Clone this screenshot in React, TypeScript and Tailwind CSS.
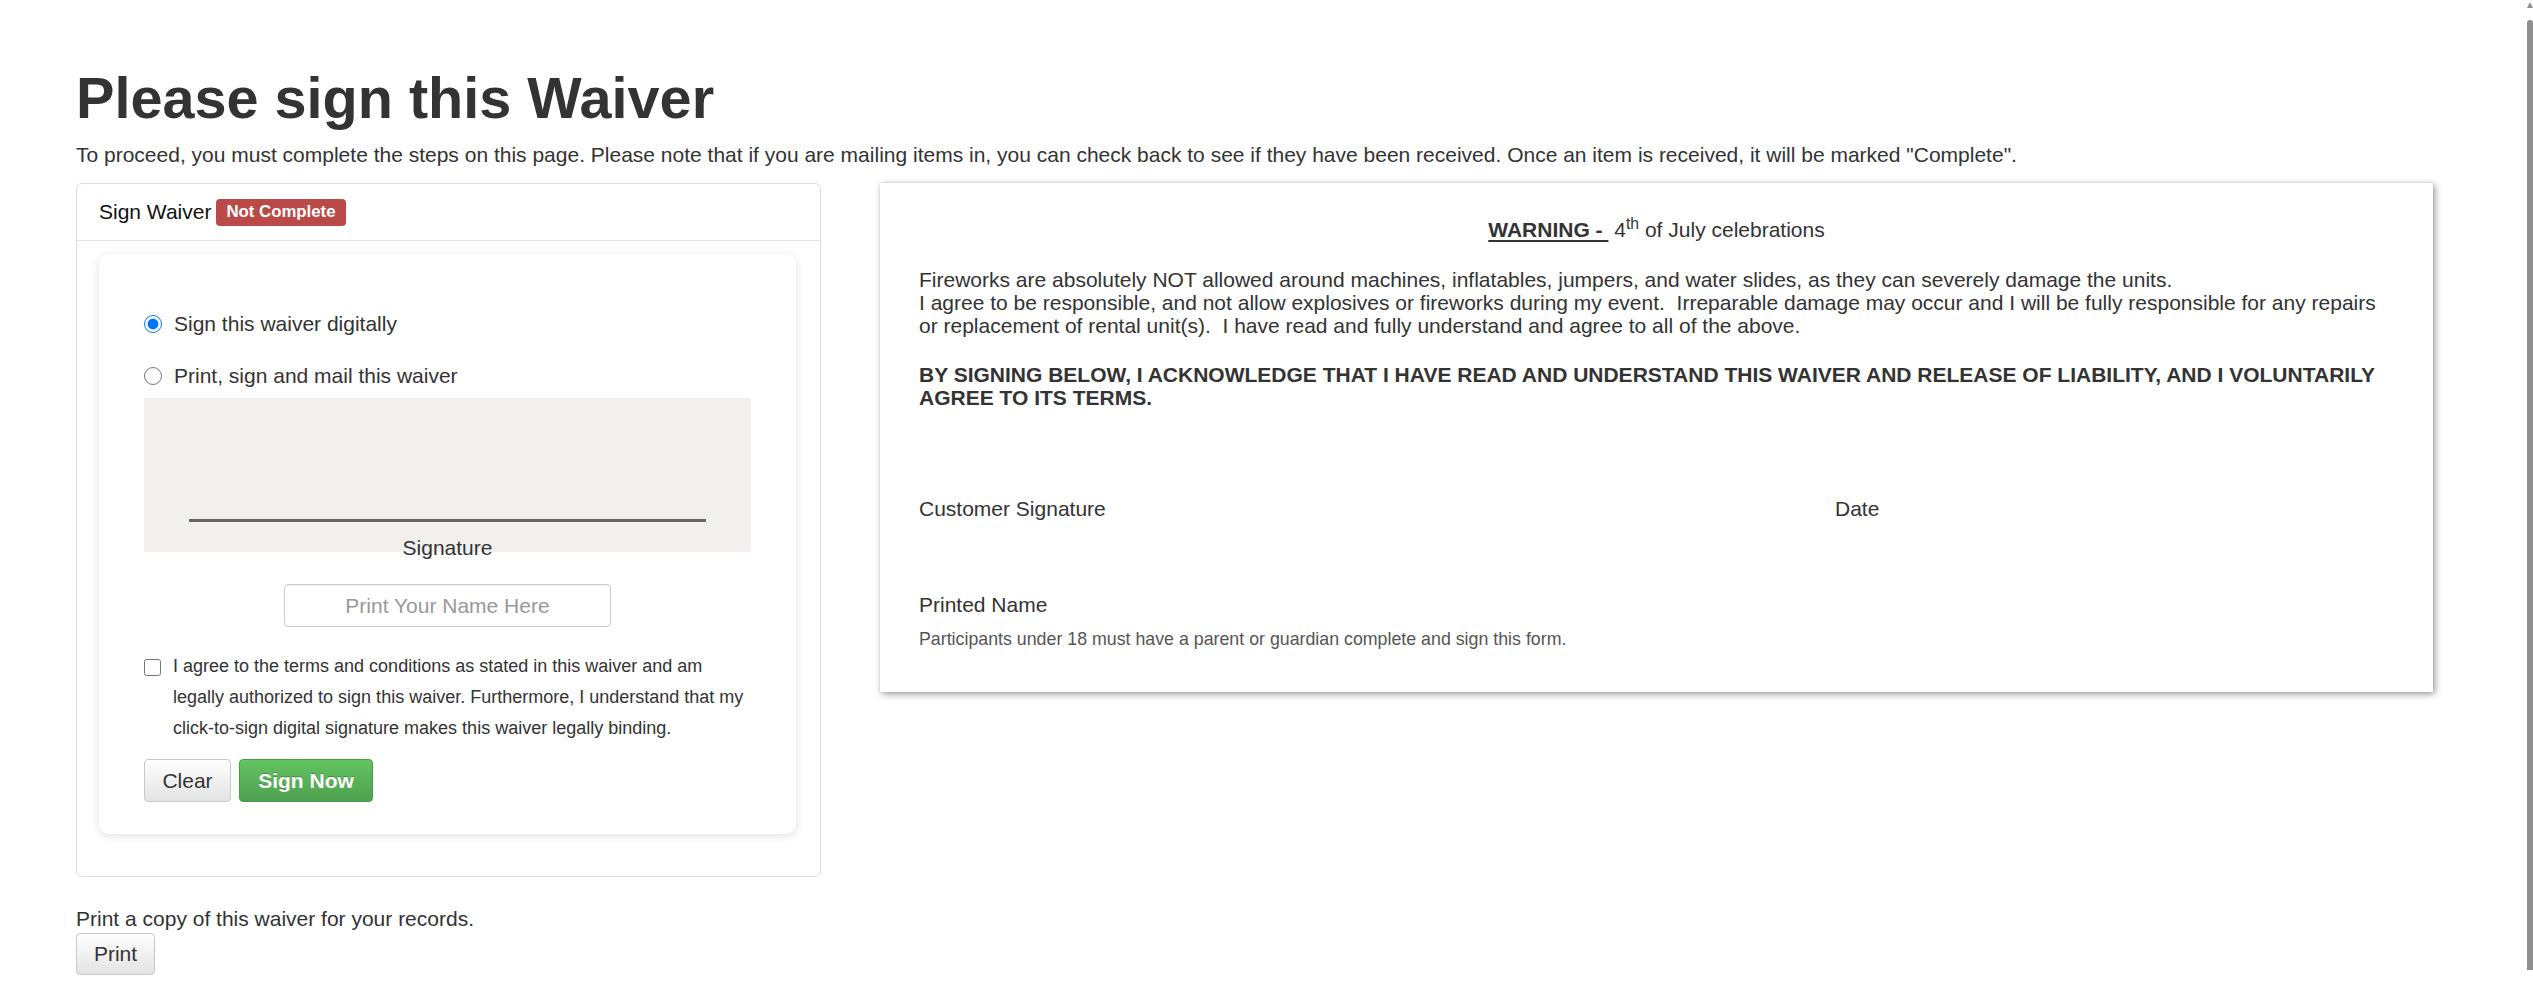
import React from "react";

function SignPanel() {
  return (
    <div className="w-[745px] shrink-0 rounded-[6px] border border-[#dddddd] bg-white">
      {/* panel heading */}
      <div className="flex h-[57px] items-center border-b border-[#e3e3e3] px-[22px]">
        <span className="text-[#111]">Sign Waiver</span>
        <span className="ml-[5px] flex h-[27px] items-center rounded-[4px] bg-[#b94a48] px-[10px] text-[16.8px] font-bold leading-none text-white">
          Not Complete
        </span>
      </div>

      {/* signing card */}
      <div className="mb-[42px] ml-[22px] mt-[13px] w-[697px] rounded-[10px] bg-white px-[45px] pb-[32px] pt-[58px] shadow-[0_2px_10px_rgba(0,0,0,0.13)]">
        <label className="flex h-[24px] items-center">
          <input
            type="radio"
            name="mode"
            defaultChecked
            className="m-0 h-[18px] w-[18px] accent-[#0075ff]"
          />
          <span className="ml-[12px]">Sign this waiver digitally</span>
        </label>
        <label className="mt-[28px] flex h-[24px] items-center">
          <input type="radio" name="mode" className="m-0 h-[18px] w-[18px]" />
          <span className="ml-[12px]">Print, sign and mail this waiver</span>
        </label>

        {/* signature pad */}
        <div className="mt-[10px] flex h-[154px] flex-col items-center justify-end bg-[#f1f0ee]">
          <div className="h-[3px] w-[517px] bg-[#666666]" />
          <div className="mb-[-8px] mt-[14px] leading-[24px] text-[#333]">Signature</div>
        </div>

        <input
          type="text"
          placeholder="Print Your Name Here"
          className="mx-auto mt-[32px] block h-[43px] w-[327px] rounded-[4px] border border-[#cccccc] bg-white text-center text-[21px] text-[#333] shadow-[inset_0_1px_1px_rgba(0,0,0,0.075)] outline-none placeholder:text-[#999]"
        />

        <label className="mt-[24px] flex items-start">
          <input
            type="checkbox"
            className="m-0 mt-[8px] h-[17px] w-[17px] shrink-0"
          />
          <span className="ml-[12px] whitespace-nowrap text-[18px] leading-[31px] text-[#333]">
            I agree to the terms and conditions as stated in this waiver and am
            <br />
            legally authorized to sign this waiver. Furthermore, I understand that my
            <br />
            click-to-sign digital signature makes this waiver legally binding.
          </span>
        </label>

        <div className="mt-[15px] flex gap-[8px]">
          <button className="h-[43px] w-[87px] rounded-[4px] border border-[#c8c8c8] bg-gradient-to-b from-white to-[#e3e3e3] text-[21px] text-[#333]">
            Clear
          </button>
          <button className="h-[43px] w-[134px] rounded-[4px] border border-[#4a9a4a] bg-gradient-to-b from-[#62c462] to-[#4fa14f] text-[21px] font-bold text-white [text-shadow:0_-1px_0_rgba(0,0,0,0.25)]">
            Sign Now
          </button>
        </div>
      </div>
    </div>
  );
}

function WaiverDocument() {
  return (
    <div className="w-[1553px] shrink-0 bg-white px-[39px] pb-[43px] pt-[35px] shadow-[2px_2px_7px_rgba(0,0,0,0.4),0_0_2px_rgba(0,0,0,0.12)]">
      <div className="text-center leading-[24px]">
        <span className="font-bold underline underline-offset-[3px]">WARNING -&nbsp;</span>
        {" "}4<sup>th</sup> of July celebrations
      </div>

      <p className="mt-[26px] whitespace-nowrap leading-[23px]">
        Fireworks are absolutely NOT allowed around machines, inflatables, jumpers, and water slides, as they can severely damage the units.
        <br />
        I agree to be responsible, and not allow explosives or fireworks during my event.&nbsp; Irreparable damage may occur and I will be fully responsible for any repairs
        <br />
        or replacement of rental unit(s).&nbsp; I have read and fully understand and agree to all of the above.
      </p>

      <p className="mt-[26px] whitespace-nowrap font-bold leading-[23px]">
        BY SIGNING BELOW, I ACKNOWLEDGE THAT I HAVE READ AND UNDERSTAND THIS WAIVER AND RELEASE OF LIABILITY, AND I VOLUNTARILY
        <br />
        AGREE TO ITS TERMS.
      </p>

      <div className="mt-[88px] flex leading-[24px]">
        <div className="w-[916px] shrink-0">Customer Signature</div>
        <div>Date</div>
      </div>

      <div className="mt-[72px] leading-[24px]">Printed Name</div>
      <div className="mt-[12px] text-[17.8px] leading-[20px] text-[#555]">
        Participants under 18 must have a parent or guardian complete and sign this form.
      </div>
    </div>
  );
}

export default function App() {
  return (
    <div className="relative min-h-screen bg-white pl-[76px] pt-[67px] font-['Liberation_Sans',Arial,Helvetica,sans-serif] text-[21px] leading-[24px] text-[#333]">
      <h1 className="text-[57.6px] font-bold leading-[63px] text-[#333]">Please sign this Waiver</h1>
      <p className="mt-[13px]">
        To proceed, you must complete the steps on this page. Please note that if you are mailing items in, you can check back to see if they have been received. Once an item is received, it will be marked "Complete".
      </p>

      <div className="mt-[16px] flex items-start gap-[59px]">
        <SignPanel />
        <WaiverDocument />
      </div>

      <div className="mt-[30px]">Print a copy of this waiver for your records.</div>
      <button className="mt-[2px] h-[42px] w-[79px] rounded-[4px] border border-[#c8c8c8] bg-gradient-to-b from-white to-[#e3e3e3] text-[21px] text-[#333]">
        Print
      </button>

      {/* page scrollbar */}
      <div className="fixed right-0 top-0 h-full w-[6px]">
        <div className="mx-auto mt-[2px] h-0 w-0 border-x-[3px] border-b-[6px] border-x-transparent border-b-[#8f8f8f]" />
        <div className="mt-[12px] h-[950px] w-[6px] rounded-t-[3px] bg-[#8f8f8f]" />
      </div>
    </div>
  );
}
